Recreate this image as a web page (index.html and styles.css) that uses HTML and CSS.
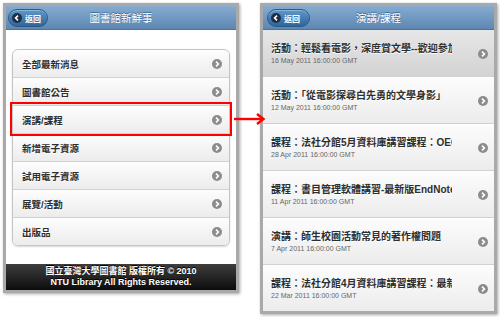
FILE: index.html
```html
<!DOCTYPE html>
<html lang="zh-Hant">

<head>
  <meta charset="UTF-8">
  <title>圖書館新鮮事</title>
  <link rel="stylesheet" href="styles.css">
</head>

<body>

  <div class="screens">

    <div class="phone phone-menu">
      <div class="header">
        <a class="back">
          <svg class="back-icon" viewBox="0 0 10 10"><circle cx="5" cy="5" r="5" fill="#1e2f44" /><path d="M6 2.6 L3.6 5 L6 7.4" fill="none" stroke="#fff" stroke-width="1.6" /></svg>
          <span>返回</span>
        </a>
        <div class="title">圖書館新鮮事</div>
      </div>

      <div class="content">
        <ul class="menu">
          <li><span>全部最新消息</span><svg class="chev" viewBox="0 0 10 10"><circle cx="5" cy="5" r="5" fill="#8c8c8c" /><path d="M4 2.6 L6.4 5 L4 7.4" fill="none" stroke="#fff" stroke-width="1.6" /></svg></li>
          <li><span>圖書館公告</span><svg class="chev" viewBox="0 0 10 10"><circle cx="5" cy="5" r="5" fill="#8c8c8c" /><path d="M4 2.6 L6.4 5 L4 7.4" fill="none" stroke="#fff" stroke-width="1.6" /></svg></li>
          <li class="marked"><span>演講/課程</span><svg class="chev" viewBox="0 0 10 10"><circle cx="5" cy="5" r="5" fill="#8c8c8c" /><path d="M4 2.6 L6.4 5 L4 7.4" fill="none" stroke="#fff" stroke-width="1.6" /></svg></li>
          <li><span>新增電子資源</span><svg class="chev" viewBox="0 0 10 10"><circle cx="5" cy="5" r="5" fill="#8c8c8c" /><path d="M4 2.6 L6.4 5 L4 7.4" fill="none" stroke="#fff" stroke-width="1.6" /></svg></li>
          <li><span>試用電子資源</span><svg class="chev" viewBox="0 0 10 10"><circle cx="5" cy="5" r="5" fill="#8c8c8c" /><path d="M4 2.6 L6.4 5 L4 7.4" fill="none" stroke="#fff" stroke-width="1.6" /></svg></li>
          <li><span>展覽/活動</span><svg class="chev" viewBox="0 0 10 10"><circle cx="5" cy="5" r="5" fill="#8c8c8c" /><path d="M4 2.6 L6.4 5 L4 7.4" fill="none" stroke="#fff" stroke-width="1.6" /></svg></li>
          <li><span>出版品</span><svg class="chev" viewBox="0 0 10 10"><circle cx="5" cy="5" r="5" fill="#8c8c8c" /><path d="M4 2.6 L6.4 5 L4 7.4" fill="none" stroke="#fff" stroke-width="1.6" /></svg></li>
        </ul>
      </div>

      <div class="footer">
        <div>國立臺灣大學圖書館 版權所有 © 2010</div>
        <div>NTU Library All Rights Reserved.</div>
      </div>
    </div>

    <div class="phone phone-list">
      <div class="header">
        <a class="back">
          <svg class="back-icon" viewBox="0 0 10 10"><circle cx="5" cy="5" r="5" fill="#1e2f44" /><path d="M6 2.6 L3.6 5 L6 7.4" fill="none" stroke="#fff" stroke-width="1.6" /></svg>
          <span>返回</span>
        </a>
        <div class="title">演講/課程</div>
      </div>

      <ul class="news">
        <li class="active">
          <div class="news-text"><div class="news-title">活動：輕鬆看電影，深度賞文學--歡迎參加</div><div class="news-date">16 May 2011 16:00:00 GMT</div></div>
          <svg class="chev" viewBox="0 0 10 10"><circle cx="5" cy="5" r="5" fill="#8c8c8c" /><path d="M4 2.6 L6.4 5 L4 7.4" fill="none" stroke="#fff" stroke-width="1.6" /></svg>
        </li>
        <li>
          <div class="news-text"><div class="news-title">活動：「從電影探尋白先勇的文學身影」</div><div class="news-date">12 May 2011 16:00:00 GMT</div></div>
          <svg class="chev" viewBox="0 0 10 10"><circle cx="5" cy="5" r="5" fill="#8c8c8c" /><path d="M4 2.6 L6.4 5 L4 7.4" fill="none" stroke="#fff" stroke-width="1.6" /></svg>
        </li>
        <li>
          <div class="news-text"><div class="news-title">課程：法社分館5月資料庫講習課程：OECD</div><div class="news-date">28 Apr 2011 16:00:00 GMT</div></div>
          <svg class="chev" viewBox="0 0 10 10"><circle cx="5" cy="5" r="5" fill="#8c8c8c" /><path d="M4 2.6 L6.4 5 L4 7.4" fill="none" stroke="#fff" stroke-width="1.6" /></svg>
        </li>
        <li>
          <div class="news-text"><div class="news-title">課程：書目管理軟體講習-最新版EndNote</div><div class="news-date">11 Apr 2011 16:00:00 GMT</div></div>
          <svg class="chev" viewBox="0 0 10 10"><circle cx="5" cy="5" r="5" fill="#8c8c8c" /><path d="M4 2.6 L6.4 5 L4 7.4" fill="none" stroke="#fff" stroke-width="1.6" /></svg>
        </li>
        <li>
          <div class="news-text"><div class="news-title">演講：師生校園活動常見的著作權問題</div><div class="news-date">7 Apr 2011 16:00:00 GMT</div></div>
          <svg class="chev" viewBox="0 0 10 10"><circle cx="5" cy="5" r="5" fill="#8c8c8c" /><path d="M4 2.6 L6.4 5 L4 7.4" fill="none" stroke="#fff" stroke-width="1.6" /></svg>
        </li>
        <li>
          <div class="news-text"><div class="news-title">課程：法社分館4月資料庫講習課程：最新</div><div class="news-date">22 Mar 2011 16:00:00 GMT</div></div>
          <svg class="chev" viewBox="0 0 10 10"><circle cx="5" cy="5" r="5" fill="#8c8c8c" /><path d="M4 2.6 L6.4 5 L4 7.4" fill="none" stroke="#fff" stroke-width="1.6" /></svg>
        </li>
      </ul>
    </div>

    <!-- arrow from the marked row to the second screen -->
    <svg class="pointer" viewBox="0 0 32 14">
      <path d="M0 7 H29" stroke="#f00" stroke-width="2.4" fill="none" />
      <path d="M23 2 L29.5 7 L23 12" stroke="#f00" stroke-width="2.4" fill="none" />
    </svg>

  </div>

</body>

</html>
```

FILE: styles.css
```css
body {
  margin: 0;
  padding: 3px;
  background-color: #fff;
  font-family: "Liberation Sans", "Noto Sans CJK TC", sans-serif;
}

ul {
  list-style: none;
  margin: 0;
  padding: 0;
}

.screens {
  position: relative;
  display: flex;
  align-items: flex-start;
  gap: 21px;
}

.phone {
  width: 231px;
  border: 3px solid #a9a9a9;
  box-shadow: 1px 1px 3px rgba(0, 0, 0, 0.35);
  background-color: #fff;
  display: flex;
  flex-direction: column;
}

/* header bar */
.header {
  position: relative;
  height: 24px;
  display: flex;
  align-items: center;
  justify-content: center;
  background: linear-gradient(#86abd0, #5d87b2);
  border-bottom: 1px solid #4a74a0;
  box-sizing: border-box;
}

.title {
  color: #fff;
  font-size: 10.5px;
  text-shadow: 0 -1px 0 #3e6690;
}

.back {
  position: absolute;
  left: 2px;
  top: 3px;
  height: 18px;
  padding: 0 6px 0 3px;
  display: flex;
  align-items: center;
  gap: 3px;
  box-sizing: border-box;
  border: 1px solid #2c5a88;
  border-radius: 9px;
  background: linear-gradient(#5e97c8, #30659b);
  box-shadow: inset 0 1px 0 rgba(255, 255, 255, 0.3);
  color: #fff;
  font-size: 8px;
  font-weight: bold;
}

.phone-list .back {
  left: 4px;
  padding-right: 9px;
}

.back-icon {
  width: 10px;
  height: 10px;
}

.chev {
  width: 10px;
  height: 10px;
  flex-shrink: 0;
}

/* first screen */
.content {
  padding: 19px 6px 18px;
}

.menu {
  border: 1px solid #c4c4c4;
  border-radius: 6px;
  box-shadow: 0 1px 2px rgba(0, 0, 0, 0.15);
}

.menu li {
  height: 27px;
  display: flex;
  align-items: center;
  justify-content: space-between;
  padding: 0 7px 0 9px;
  background: linear-gradient(#fdfdfd, #ececec);
  border-top: 1px solid #d2d2d2;
  color: #2e2e2e;
  font-size: 9.5px;
  font-weight: bold;
  text-shadow: 0 1px 0 #fff;
}

.menu li:first-child {
  border-top: none;
  border-radius: 6px 6px 0 0;
}

.menu li:last-child {
  border-radius: 0 0 6px 6px;
}

.menu li.marked {
  outline: 2px solid #f00;
  outline-offset: 1px;
  position: relative;
}

.footer {
  height: 26px;
  display: flex;
  flex-direction: column;
  justify-content: center;
  background: linear-gradient(#3e3e3e, #0c0c0c);
  color: #fff;
  font-size: 9px;
  font-weight: bold;
  line-height: 11.5px;
  text-align: center;
  text-shadow: 0 -1px 0 #000;
}

/* second screen */
.news li {
  height: 45px;
  display: flex;
  align-items: center;
  padding: 0 6px 0 8px;
  background: linear-gradient(#fcfcfc, #ececec);
  border-bottom: 1px solid #d0d0d0;
  border-top: 1px solid #fff;
}

.news li.active {
  background: linear-gradient(#e6e6e6, #d3d3d3);
  border-top-color: #e6e6e6;
}

.news li:last-child {
  border-bottom: none;
}

.news-text {
  flex: 1;
  min-width: 0;
  margin-right: 26px;
}

.news-title {
  color: #2e2e2e;
  font-size: 10px;
  font-weight: bold;
  line-height: 13px;
  white-space: nowrap;
  overflow: hidden;
  text-shadow: 0 1px 0 #fff;
}

.news-date {
  margin-top: 1px;
  color: #666;
  font-size: 7px;
  line-height: 9px;
}

.pointer {
  position: absolute;
  left: 231px;
  top: 109px;
  width: 32px;
  height: 14px;
}
```
